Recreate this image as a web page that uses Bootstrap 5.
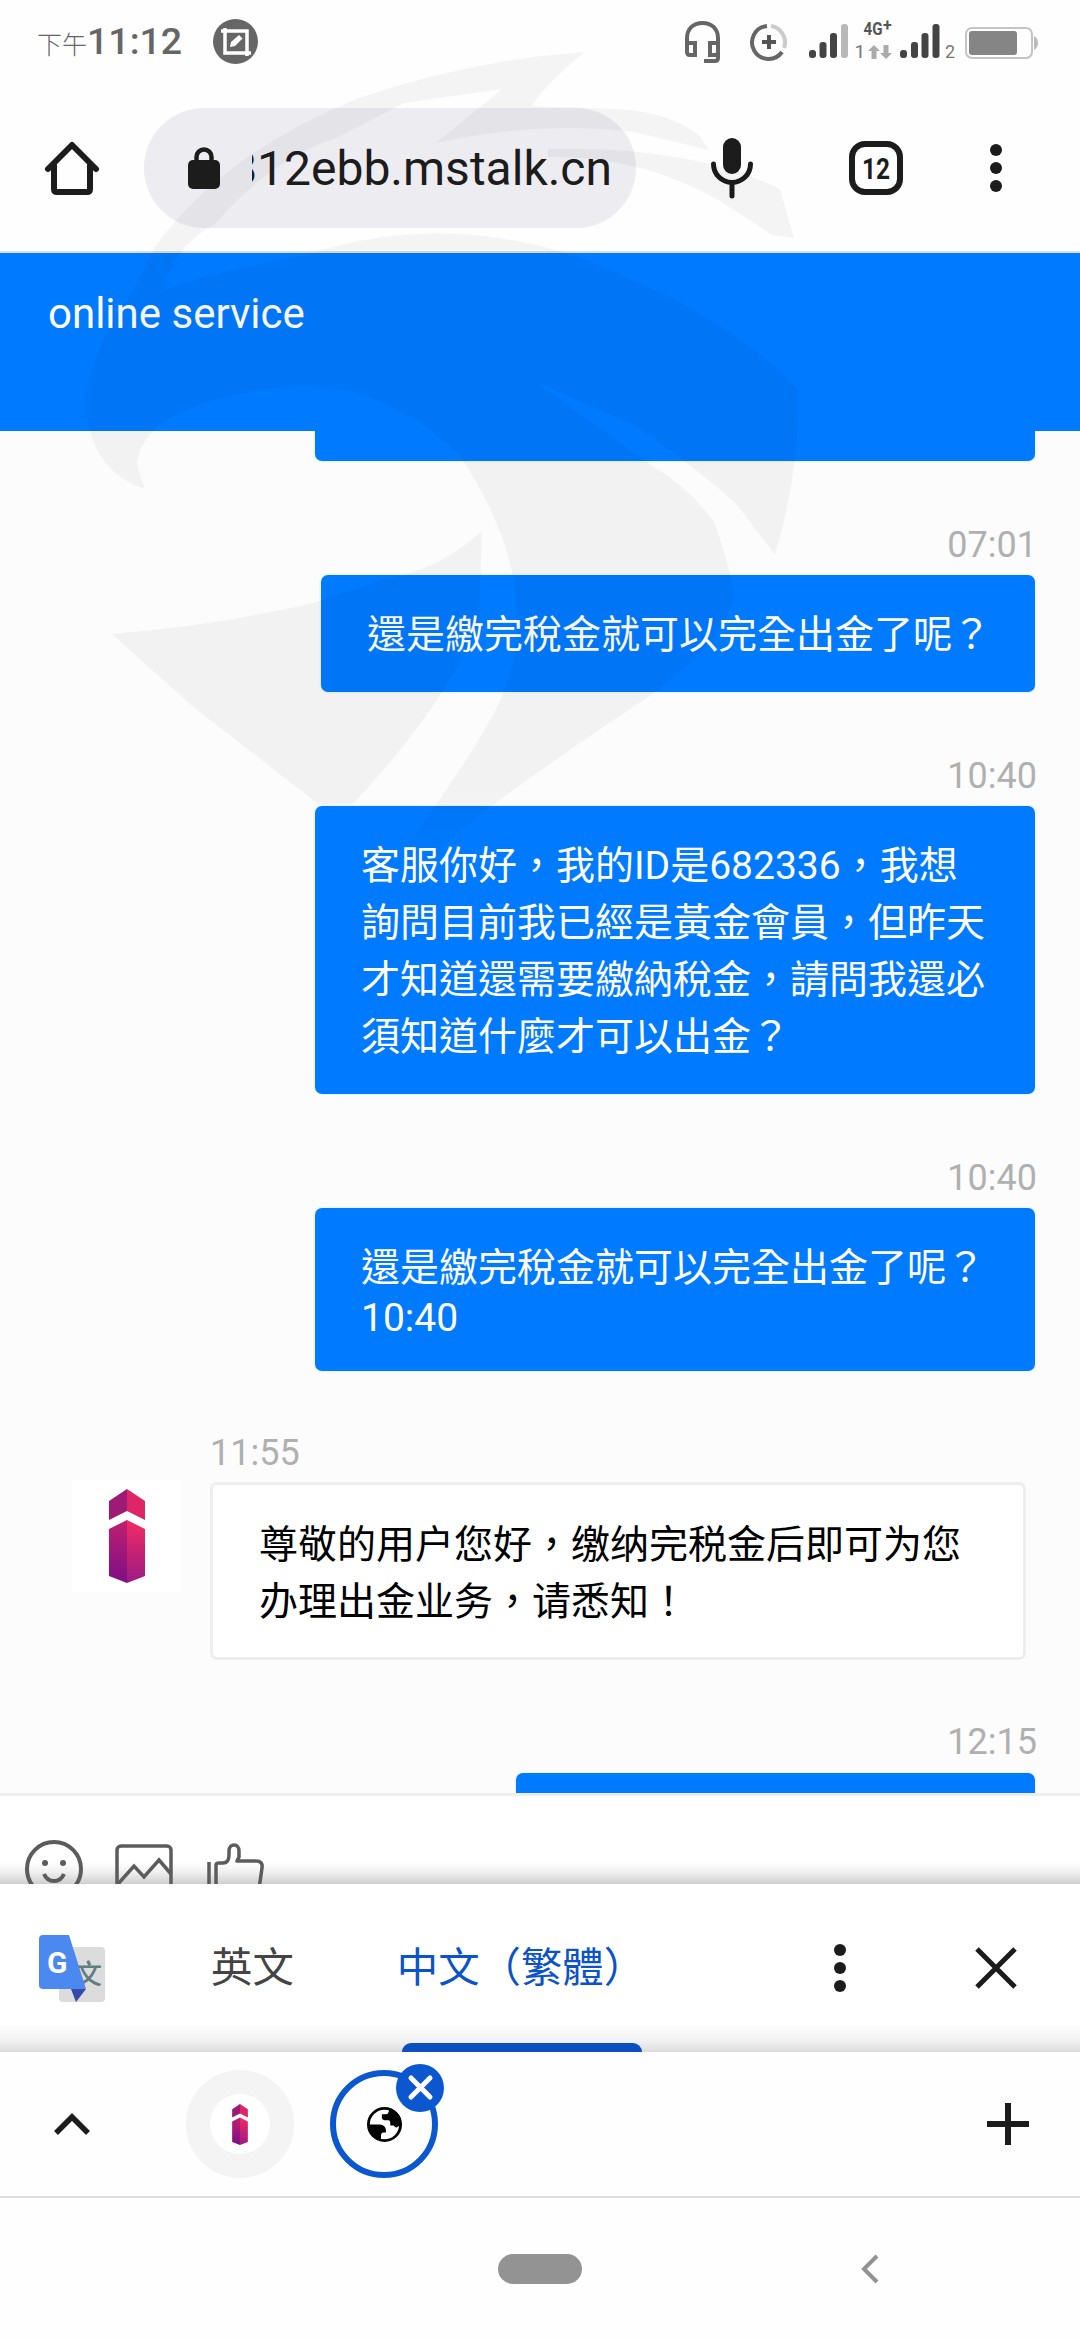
<!DOCTYPE html>
<html lang="zh-Hant">
<head>
<meta charset="utf-8">
<meta name="viewport" content="width=device-width, initial-scale=1">
<title>online service</title>
<link href="https://cdn.jsdelivr.net/npm/bootstrap@5.3.0/dist/css/bootstrap.min.css" rel="stylesheet">
<script src="https://cdn.jsdelivr.net/npm/bootstrap@5.3.0/dist/js/bootstrap.bundle.min.js"></script>
<style>
  body { font-family: Roboto, "Noto Sans CJK TC", sans-serif; background: #fefefe; color: #1c1c1c; }
  svg { display: block; flex: none; overflow: visible; }
  .phone { width: 1080px; height: 2340px; overflow: hidden; }
  .status { height: 84px; padding-left: 37px; color: #666; }
  .clock { font-size: 37.5px; font-weight: 500; line-height: 44px; width: 176px; padding-top: 3px; }
  .clock span { font-size: 25px; font-weight: 300; }
  .toolbar { height: 167px; }
  .omni { width: 492px; height: 120px; margin: 0 75px 0 45px; border-radius: 60px; background: #ededf1; }
  .url { width: 360px; height: 60px; margin-left: 32px; overflow: hidden; font-size: 48px; line-height: 61px; white-space: nowrap; }
  .site-head { height: 180px; border-top: 2px solid #d9dfe6; background: #007aff; color: #fff; padding: 36px 48px; font-size: 42px; line-height: 50px; }
  .chat { height: 1362px; overflow: hidden; background: #fcfcfc; padding-right: 45px; }
  .chat > * { flex-shrink: 0; }
  .stamp { font-size: 36px; line-height: 42px; margin: 63px -2px 9px 0; color: #b0b0b0; text-align: right; }
  .bubble { width: 720px; border-radius: 7px; background: #007aff; color: #fff; padding: 32px 46px 28px; font-size: 39px; line-height: 57px; white-space: nowrap; box-shadow: 0 0 3px #cfeaf7; }
  .bubble.slim { width: 714px; }
  .stub { height: 30px; padding: 0; border-radius: 0 0 7px 7px; }
  .nextmsg { width: 519px; height: 80px; }
  .tail { line-height: 46px; margin-top: -2px; margin-bottom: 2px; }
  .reply { margin-left: 72px; }
  .reply .stamp { text-align: left; margin: 60px 0 7px; line-height: 44px; }
  .avatar { width: 109px; height: 112px; background: #fff; margin: 109px 29px 0 0; }
  .plain { width: 816px; height: 178px; border: 3px solid #eee; border-radius: 7px; background: #fff; color: #000; padding: 32px 46px 0; font-size: 39px; line-height: 57px; white-space: nowrap; }
  .compose { height: 91px; border-top: 3px solid #eee; overflow: hidden; padding: 45px 0 0 25px; background: linear-gradient(#fff 66px, #f0f0f0 76px, #cfcfcf 88px); }
  .translate { height: 168px; background: linear-gradient(#fff 138px, #f1f1f1 157px, #dcdcdc 168px); padding-left: 39px; font-size: 41.4px; }
  .lang { line-height: 64px; color: #444; white-space: nowrap; }
  .lang.on { color: #0b53c8; }
  .lang.on::after { content: ""; position: absolute; left: 5px; top: 107px; width: 240px; height: 9px; border-radius: 9px 9px 0 0; background: #0b50c0; }
  .strip { height: 146px; border-bottom: 2px solid #dedede; padding-left: 54px; background: #fefefe; }
  .tabdot { width: 108px; height: 108px; border-radius: 50%; background: #f4f4f4; }
  .tabdot i { width: 60px; height: 60px; border-radius: 50%; background: #fff; }
  .tabdot.on { background: #fefefe; border: 6px solid #0b57d0; }
  .shut { position: absolute; left: 60px; top: -12px; }
  .gesture { height: 142px; padding: 0 0 1px 498px; }
  .gesture b { width: 84px; height: 30px; border-radius: 15px; background: #939393; }
  .mark-over { position: absolute; left: 0; top: 0; pointer-events: none; }
</style>
</head>
<body>
<svg width="0" height="0" class="position-absolute">
  <defs>
    <linearGradient id="dk" x1="0" y1="0" x2="0" y2="1"><stop offset="0" stop-color="#c01f70"/><stop offset="1" stop-color="#7d0f86"/></linearGradient>
    <linearGradient id="lt" x1="0" y1="0" x2="0" y2="1"><stop offset="0" stop-color="#f42a64"/><stop offset="1" stop-color="#9a1b83"/></linearGradient>
    <symbol id="tower" viewBox="0 0 36 94">
      <path fill="#9d1a75" d="M18 0v22L0 31V12z"/><path fill="#dd2568" d="M18 0l18 12v19L18 22z"/>
      <path fill="url(#dk)" d="M18 31v63L0 87V40z"/><path fill="url(#lt)" d="M18 31l18 9v47l-18 7z"/>
    </symbol>
  </defs>
</svg>
<div class="phone position-relative d-flex flex-column">
  <header class="status d-flex align-items-center flex-shrink-0">
    <div class="clock text-nowrap"><span>下午</span>11:12</div>
    <svg width="46" height="46" viewBox="0 0 46 46"><circle cx="22.500" cy="22.500" r="22.500" fill="#666"/><g fill="none" stroke="#fff" stroke-width="3.500"><path d="M12 9v25h26M8 12h26v25"/></g><path d="M17 28l1-5 8-7 3.500 3.500-7.500 7.500z" fill="#fff"/></svg>
    <svg class="ms-auto" width="36" height="42" viewBox="0 0 36 42" fill="none" stroke="#666" stroke-width="4"><path d="M2 24V17C2 8 8 2 17.500 2S33 8 33 17v20q0 3-3 3H19"/><path d="M2 22h8v12H5q-3 0-3-3zM33 22h-8v12h5q3 0 3-3z"/></svg>
    <svg style="margin-left:29px" width="38" height="38" viewBox="0 0 38 38" fill="none" stroke-width="4"><path d="M17 3a16.500 16.500 0 1 0 15 26" stroke="#666"/><path d="M21 3a16.500 16.500 0 0 1 13 22" stroke="#ccc"/><path d="M19 12v14M12 19h14" stroke="#555"/></svg>
    <svg style="margin-left:21px" width="231" height="42" viewBox="0 0 231 42" fill="#444" font-family="Roboto">
      <rect y="29" width="7" height="8" rx="3"/><rect x="10.500" y="21" width="7" height="16" rx="3"/><rect x="21" y="12" width="7" height="25" rx="3"/><rect x="32" y="3" width="7" height="34" rx="3" fill="#b8b8b8"/>
      <text x="54.500" y="14" font-size="19" font-weight="700" textLength="19" lengthAdjust="spacingAndGlyphs" fill="#555">4G</text><text x="74" y="10" font-size="16" font-weight="700" fill="#555">+</text>
      <text x="45.500" y="37" font-size="19" fill="#777">1</text>
      <path fill="#aaa" d="M65 24l6 6h-3.500v8h-5v-8H59zM77 38l6-6h-3.500v-8h-5v8H71z"/>
      <rect x="91" y="29" width="7" height="8" rx="3"/><rect x="102" y="21" width="7" height="16" rx="3"/><rect x="112.500" y="12" width="7" height="25" rx="3"/><rect x="123.500" y="3" width="7" height="34" rx="3"/>
      <text x="136" y="37" font-size="18" fill="#777">2</text>
      <rect x="157" y="7" width="66" height="30" rx="6" fill="none" stroke="#c4c4c4" stroke-width="2"/><rect x="160" y="10" width="48" height="24" rx="3" fill="#858585"/><path d="M225 15q4 2 4 7t-4 7z" fill="#bbb"/>
    </svg>
    <div style="width:40px"></div>
  </header>

  <nav class="toolbar d-flex align-items-center flex-shrink-0">
    <svg style="margin-left:45px" width="54" height="54" viewBox="0 0 54 54" fill="none" stroke="#1c1c1c" stroke-width="6" stroke-linejoin="round" stroke-linecap="round"><path d="M3 28L27 4l24 24M9 24v24q0 3 3 3h30q3 0 3-3V24"/></svg>
    <div class="omni d-flex align-items-center">
      <svg style="margin-left:44px" width="32" height="42" viewBox="0 0 32 42"><rect y="13" width="32" height="29" rx="5" fill="#1c1c1c"/><path d="M8.500 15v-5a7.500 7.500 0 0 1 15 0v5" fill="none" stroke="#1c1c1c" stroke-width="4.500"/></svg>
      <div class="url d-flex justify-content-end"><span>812ebb.mstalk.cn</span></div>
    </div>
    <svg width="42" height="60" viewBox="0 0 42 60"><rect x="12" width="18" height="36" rx="9" fill="#1c1c1c"/><path d="M2.500 26a18.500 18.500 0 0 0 37 0M21 45v13" fill="none" stroke="#1c1c1c" stroke-width="5" stroke-linecap="round"/></svg>
    <svg style="margin-left:96px" width="54" height="54" viewBox="0 0 54 54"><rect x="3" y="3" width="48" height="48" rx="13" fill="none" stroke="#1c1c1c" stroke-width="6"/><text x="13" y="38" font-family="Roboto" font-size="30" font-weight="700" textLength="28" lengthAdjust="spacingAndGlyphs" fill="#1c1c1c">12</text></svg>
    <svg style="margin-left:87px" width="12" height="48" viewBox="0 0 12 48" fill="#1c1c1c"><circle cx="6" cy="6" r="6"/><circle cx="6" cy="24" r="6"/><circle cx="6" cy="42" r="6"/></svg>
  </nav>

  <div class="site-head flex-shrink-0">online service</div>

  <main class="chat d-flex flex-column align-items-end flex-shrink-0">
    <div class="bubble stub"></div>
    <div class="stamp">07:01</div>
    <div class="bubble slim">還是繳完稅金就可以完全出金了呢？</div>
    <div class="stamp">10:40</div>
    <div class="bubble">客服你好，我的ID是682336，我想<br>詢問目前我已經是黃金會員，但昨天<br>才知道還需要繳納稅金，請問我還必<br>須知道什麼才可以出金？</div>
    <div class="stamp">10:40</div>
    <div class="bubble">還是繳完稅金就可以完全出金了呢？<div class="tail">10:40</div></div>
    <div class="reply d-flex align-self-start">
      <div class="avatar d-flex justify-content-center"><svg style="margin-top:9px" width="36" height="94"><use href="#tower"/></svg></div>
      <div>
        <div class="stamp">11:55</div>
        <div class="plain">尊敬的用户您好，缴纳完税金后即可为您<br>办理出金业务，请悉知！</div>
      </div>
    </div>
    <div class="stamp" style="margin-top:61px;margin-bottom:10px">12:15</div>
    <div class="bubble nextmsg"></div>
  </main>

  <section class="compose d-flex flex-shrink-0">
    <svg width="58" height="58" viewBox="0 0 58 58" fill="none" stroke="#5c5c5c" stroke-width="4"><circle cx="29" cy="28" r="27"/><path d="M19 33q3 7 10 7t10-7"/><circle cx="20" cy="22" r="3" fill="#5c5c5c" stroke="none"/><circle cx="38" cy="22" r="3" fill="#5c5c5c" stroke="none"/></svg>
    <svg style="margin-left:32px" width="58" height="58" viewBox="0 0 58 58" fill="none" stroke="#5c5c5c" stroke-width="3.500"><rect x="2" y="5" width="54" height="48" rx="4"/><path d="M3 43l16-18 10 11 15-17 12 14"/></svg>
    <svg style="margin-left:34px" width="58" height="58" viewBox="0 0 58 58" fill="none" stroke="#5c5c5c" stroke-width="3.500" stroke-linejoin="round"><path d="M2 21v34M9 55V24q0-2 3-2h4q6 0 6-8V10c0-8 10-8 10 0v6l-2 4h19q7 0 6 7l-4 28"/></svg>
  </section>

  <section class="translate d-flex align-items-center flex-shrink-0">
    <svg width="66" height="67" viewBox="0 0 66 67"><rect x="20" y="12" width="46" height="55" rx="4" fill="#dcdcdc"/><text x="36" y="49" font-family="Noto Sans CJK TC" font-size="27" font-weight="500" fill="#607d80">文</text><path d="M32 54h15L37 67z" fill="#3949ab"/><path d="M4 0h26l17 54H4q-4 0-4-4V4q0-4 4-4z" fill="#4b89f0"/><text x="8" y="38" font-family="Roboto" font-size="30" font-weight="700" fill="#fff">G</text></svg>
    <div class="lang" style="margin-left:106px">英文</div>
    <div class="lang on position-relative" style="margin-left:103px">中文（繁體）</div>
    <svg class="ms-auto" width="12" height="48" viewBox="0 0 12 48" fill="#1c1c1c"><circle cx="6" cy="6" r="6"/><circle cx="6" cy="24" r="6"/><circle cx="6" cy="42" r="6"/></svg>
    <svg style="margin:0 64px 0 130px" width="40" height="40" viewBox="0 0 40 40" stroke="#1c1c1c" stroke-width="5"><path d="M1 1l38 38M39 1L1 39"/></svg>
  </section>

  <section class="strip d-flex align-items-center flex-shrink-0">
    <svg width="36" height="24" viewBox="0 0 36 24" fill="none" stroke="#1c1c1c" stroke-width="5.500"><path d="M2 21L18 5l16 16"/></svg>
    <div class="tabdot d-flex align-items-center justify-content-center" style="margin-left:96px"><i class="d-flex align-items-center justify-content-center"><svg width="16" height="41"><use href="#tower"/></svg></i></div>
    <div class="tabdot on d-flex align-items-center justify-content-center position-relative" style="margin-left:36px">
      <svg width="35" height="35" viewBox="2 2 20 20"><circle cx="12" cy="12" r="9.200" fill="none" stroke="#000" stroke-width="1.600"/><path d="M3 12h6.500q3 .4 3.300 3v1.500H11q-1 .3-1 1.500v3Q3 19.500 3 12zM14.500 3v1.500q-.3 1.500-2 1.600h-2v2.200q.3 1.200 1.500 1.200h2.500q.8.300.8 1.500v1.500h2q1.200 2 2.700.5l1.500-1Q22 5 14.500 3z"/></svg>
      <svg class="shut" width="48" height="48" viewBox="0 0 48 48"><circle cx="24" cy="24" r="24" fill="#0b57d0"/><path d="M15 14l19 19M34 14L15 33" stroke="#fff" stroke-width="5" stroke-linecap="round"/></svg>
    </div>
    <svg class="ms-auto" style="margin-right:51px" width="42" height="42" viewBox="0 0 42 42" stroke="#1c1c1c" stroke-width="6"><path d="M21 0v42M0 21h42"/></svg>
  </section>

  <footer class="gesture d-flex align-items-center flex-shrink-0">
    <b></b>
    <svg style="margin-left:279px" width="18" height="30" viewBox="0 0 18 30" fill="none" stroke="#939393" stroke-width="4"><path d="M16 2L3 15l13 13"/></svg>
  </footer>

  <svg class="mark-over" width="1080" height="900" viewBox="0 0 1080 900" fill="#000" fill-opacity=".04">
    <defs><linearGradient id="fade" gradientUnits="userSpaceOnUse" x1="0" y1="790" x2="0" y2="875"><stop offset="0" stop-opacity="1"/><stop offset="1" stop-opacity="0"/></linearGradient></defs>
    <path fill="url(#fade)" d="M585 52Q470 60 359 98Q220 155 155 247L129 298Q90 350 86 402Q88 470 145 489L137 465Q140 410 261 390Q330 378 381 402Q433 425 462 459Q560 610 485 729Q462 769 404 850L404 875L440 848Q493 800 651 695Q720 645 735 597Q725 550 714 522Q690 488 651 465L536 382L634 425Q700 470 737 505L775 555Q800 470 798 390Q740 325 623 276Q550 240 462 234Q381 230 313 253Q220 270 163 290Q175 245 215 224Q270 160 336 138L404 103L502 89L436 143Q540 120 634 132L709 150L700 136Q670 112 617 109L531 106Q550 80 585 52z"/>
    <path d="M548 149Q690 145 780 189L794 238L772 235L720 201Q640 155 548 157z"/>
    <path d="M482 531Q440 570 381 580L313 603Q220 625 112 634L192 706L318 804H353Q450 700 479 620z"/>
  </svg>
</div>
</body>
</html>
